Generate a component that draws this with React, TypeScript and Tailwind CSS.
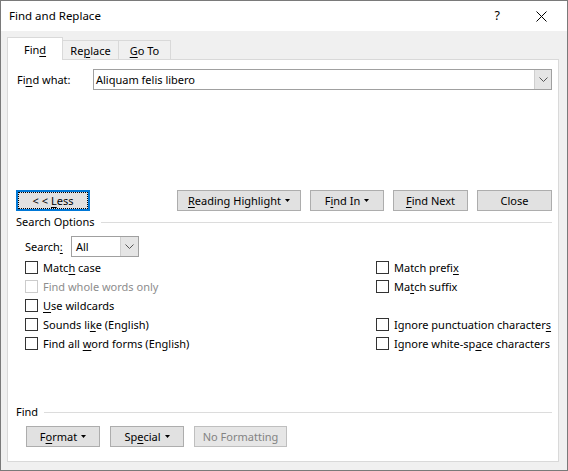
import type { ReactNode } from 'react';

const font = "font-['Noto_Sans','Liberation_Sans',sans-serif] text-[11px] leading-none whitespace-nowrap";

function U({ children }: { children: ReactNode }) {
  return <span className="underline underline-offset-[2px] decoration-1">{children}</span>;
}

function Caret({ muted }: { muted?: boolean }) {
  return (
    <svg width="5" height="3" viewBox="0 0 5 3" className="ml-[4px] mt-[1px]">
      <path d="M0 0h5L2.5 3z" fill={muted ? '#8a8a8a' : '#000'} />
    </svg>
  );
}

function Chevron() {
  return (
    <svg width="9" height="5" viewBox="0 0 9 5">
      <path d="M0.5 0.5l4 4l4-4" fill="none" stroke="#555" strokeWidth="1" />
    </svg>
  );
}

function Button({
  children,
  className = '',
  disabled,
  focused,
}: {
  children: ReactNode;
  className?: string;
  disabled?: boolean;
  focused?: boolean;
}) {
  const base = 'h-[21px] flex items-center justify-center shrink-0 pb-px';
  if (focused) {
    return (
      <div
        className={`${base} ${className} bg-[#e1e1e1] border-2 border-[#0078d7] outline-1 outline-dotted outline-black outline-offset-[-3px]`}
      >
        {children}
      </div>
    );
  }
  return (
    <div
      className={`${base} ${className} border ${
        disabled ? 'bg-[#e6e6e6] border-[#bfbfbf] text-[#838383]' : 'bg-[#e1e1e1] border-[#adadad]'
      }`}
    >
      {children}
    </div>
  );
}

function Check({ children, disabled }: { children?: ReactNode; disabled?: boolean }) {
  if (!children) return <div className="h-[19px]" />;
  return (
    <div className="h-[19px] flex items-center">
      <div
        className={`w-[13px] h-[13px] border bg-white shrink-0 ${disabled ? 'border-[#cccccc]' : 'border-[#333333]'}`}
      />
      <span className={`ml-[5px] pb-px ${disabled ? 'text-[#8d8d8d]' : ''}`}>{children}</span>
    </div>
  );
}

function GroupLabel({ children }: { children: ReactNode }) {
  return (
    <div className="h-[16px] flex items-center">
      <span className="pb-px">{children}</span>
      <div className="flex-1 h-px bg-[#dcdcdc] ml-[6px]" />
    </div>
  );
}

export default function App() {
  return (
    <div className={`${font} w-[568px] h-[471px] border border-[#7a7a7a] flex flex-col text-black bg-white`}>
      {/* title bar */}
      <div className="h-[30px] flex items-center bg-white shrink-0">
        <span className="ml-[8px] text-[11.5px]">Find and Replace</span>
        <span className="ml-auto text-[12.5px] mr-[36px]">?</span>
        <svg width="11" height="11" viewBox="0 0 11 11" className="mr-[20px]">
          <path d="M0.5 0.5l10 10M10.5 0.5l-10 10" stroke="#000" strokeWidth="1" />
        </svg>
      </div>

      <div className="flex-1 bg-[#f0f0f0] pt-[6px] pl-[6px] pr-[8px] pb-[8px] flex flex-col">
        {/* tabs */}
        <div className="h-[23px] flex items-end relative z-10 -mb-px shrink-0">
          <div className="w-[56px] h-[23px] bg-white border border-b-0 border-[#d9d9d9] flex items-center justify-center pt-[1px]">
            Fin<U>d</U>
          </div>
          <div className="w-[56px] h-[20px] border border-l-0 border-[#d9d9d9] flex items-center justify-center">
            Re<U>p</U>lace
          </div>
          <div className="w-[52px] h-[20px] border border-l-0 border-[#d9d9d9] flex items-center justify-center">
            <U>G</U>o To
          </div>
        </div>

        {/* panel */}
        <div className="flex-1 bg-white border border-[#d9d9d9] pl-[8px] pr-[6px] flex flex-col">
          <div className="mt-[9px] h-[21px] flex items-center">
            <span className="ml-[1px] w-[76px] pb-px">
              Fi<U>n</U>d what:
            </span>
            <div className="flex-1 h-[21px] border border-[#a0a0a0] flex items-center">
              <span className="ml-[2px] pb-px">Aliquam felis libero</span>
              <div className="ml-auto h-[19px] w-[17px] bg-[#e5e5e5] border-l border-[#cfcfcf] flex items-center justify-center">
                <Chevron />
              </div>
            </div>
          </div>

          <div className="mt-[100px] flex">
            <Button focused className="w-[74px]">
              &lt; &lt; <span className="ml-[3px]"><U>L</U>ess</span>
            </Button>
            <Button className="w-[124px] ml-[87px]">
              <U>R</U>eading Highlight
              <Caret />
            </Button>
            <Button className="w-[74px] ml-[9px]">
              F<U>i</U>nd In
              <Caret />
            </Button>
            <Button className="w-[75px] ml-[9px]">
              <U>F</U>ind Next
            </Button>
            <Button className="w-[75px] ml-[9px]">Close</Button>
          </div>

          <div className="mt-[3px]">
            <GroupLabel>Search Options</GroupLabel>
          </div>

          <div className="mt-[6px] h-[21px] flex items-center pl-[9px]">
            <span className="w-[46px] pb-px">
              Search<U>:</U>
            </span>
            <div className="w-[68px] h-[21px] border border-[#a0a0a0] flex items-center">
              <span className="ml-[4px] pb-px">All</span>
              <div className="ml-auto h-[19px] w-[18px] bg-[#e5e5e5] border-l border-[#cfcfcf] flex items-center justify-center">
                <Chevron />
              </div>
            </div>
          </div>

          <div className="mt-[1px] grid grid-cols-[351px_1fr] pl-[9px]">
            <div className="flex flex-col">
              <Check>
                Matc<U>h</U> case
              </Check>
              <Check disabled>Find whole words only</Check>
              <Check>
                <U>U</U>se wildcards
              </Check>
              <Check>
                Sounds li<U>k</U>e (English)
              </Check>
              <Check>
                Find all <U>w</U>ord forms (English)
              </Check>
            </div>
            <div className="flex flex-col">
              <Check>
                Match prefi<U>x</U>
              </Check>
              <Check>
                Ma<U>t</U>ch suffix
              </Check>
              <Check />
              <Check>
                Ignore punctuation character<U>s</U>
              </Check>
              <Check>
                Ignore white-sp<U>a</U>ce characters
              </Check>
            </div>
          </div>

          <div className="mt-[51px]">
            <GroupLabel>Find</GroupLabel>
          </div>

          <div className="mt-[6px] flex pl-[10px]">
            <Button className="w-[74px]">
              F<U>o</U>rmat
              <Caret />
            </Button>
            <Button className="w-[74px] ml-[10px]">
              Sp<U>e</U>cial
              <Caret />
            </Button>
            <Button disabled className="w-[93px] ml-[10px]">
              No Formatting
            </Button>
          </div>
        </div>
      </div>
    </div>
  );
}
